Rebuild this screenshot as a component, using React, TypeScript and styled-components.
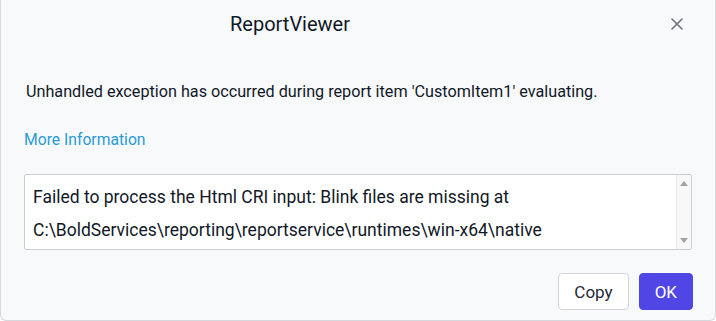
import React from 'react'
import styled, { createGlobalStyle } from 'styled-components'

const GlobalStyle = createGlobalStyle`
  html, body {
    margin: 0;
    padding: 0;
    background: #ffffff;
  }
  body {
    font-family: Roboto, "Liberation Sans", Arial, sans-serif;
  }
`

const Dialog = styled.div`
  box-sizing: border-box;
  width: 716px;
  height: 321px;
  background: #f8f9fb;
  border: 1px solid #d5d8dd;
  border-top: none;
  border-radius: 0 0 6px 6px;
  display: flex;
  flex-direction: column;
`

const Header = styled.div`
  height: 48px;
  display: flex;
  align-items: center;
  padding: 0 26px 0 229px;
`

const Title = styled.h2`
  flex: 1;
  margin: 0;
  font-size: 20px;
  font-weight: 400;
  color: #111827;
`

const CloseButton = styled.button`
  width: 24px;
  height: 24px;
  padding: 0;
  border: none;
  background: transparent;
  display: flex;
  align-items: center;
  justify-content: center;
  cursor: pointer;
`

const Body = styled.div`
  flex: 1;
  display: flex;
  flex-direction: column;
  padding: 34px 23px 0 23px;
`

const Message = styled.p`
  margin: 0 0 0 2px;
  font-size: 16.2px;
  line-height: 20px;
  color: #111827;
`

const MoreLink = styled.a`
  margin-top: 28px;
  font-size: 15.7px;
  line-height: 20px;
  font-weight: 400;
  color: #2a9bd6;
  text-decoration: none;
  cursor: pointer;
`

const DetailBox = styled.div`
  margin-top: 24px;
  height: 76px;
  box-sizing: border-box;
  border: 1px solid #c9ccd1;
  border-radius: 2px;
  background: #ffffff;
  display: flex;
`

const DetailText = styled.div`
  flex: 1;
  padding: 6px 8px 0 8px;
  font-size: 17.5px;
  line-height: 33px;
  color: #111827;
  overflow: hidden;
`

const ScrollTrack = styled.div`
  width: 14px;
  border-left: 1px solid #ececec;
  background: #f8f8f8;
  display: flex;
  flex-direction: column;
  justify-content: space-between;
  align-items: center;
  padding: 3px 0;
`

const Arrow = styled.span<{ down?: boolean }>`
  width: 0;
  height: 0;
  border-left: 4px solid transparent;
  border-right: 4px solid transparent;
  ${p => (p.down ? 'border-top: 5px solid #a3a3a3;' : 'border-bottom: 5px solid #a3a3a3;')}
  margin: 3px 0;
`

const Footer = styled.div`
  height: 60px;
  display: flex;
  justify-content: flex-end;
  align-items: flex-start;
  gap: 10px;
  padding: 13px 22px 0 0;
  box-sizing: border-box;
`

const Button = styled.button<{ primary?: boolean }>`
  height: 37px;
  box-sizing: border-box;
  padding: 0 15px;
  border-radius: 4px;
  font-family: Roboto, "Liberation Sans", Arial, sans-serif;
  font-size: 17px;
  cursor: pointer;
  border: 1px solid ${p => (p.primary ? '#4f46e5' : '#d1d5db')};
  background: ${p => (p.primary ? '#4f46e5' : '#ffffff')};
  color: ${p => (p.primary ? '#ffffff' : '#1f2937')};
`

export default function App() {
  return (
    <>
      <GlobalStyle />
      <Dialog>
        <Header>
          <Title>ReportViewer</Title>
          <CloseButton aria-label="Close">
            <svg width="14" height="14" viewBox="0 0 14 14">
              <path d="M2 2 L12 12 M12 2 L2 12" stroke="#6b7280" strokeWidth="1.6" strokeLinecap="round" />
            </svg>
          </CloseButton>
        </Header>
        <Body>
          <Message>Unhandled exception has occurred during report item 'CustomItem1' evaluating.</Message>
          <MoreLink>More Information</MoreLink>
          <DetailBox>
            <DetailText>
              Failed to process the Html CRI input: Blink files are missing at
              <br />
              C:\BoldServices\reporting\reportservice\runtimes\win-x64\native
            </DetailText>
            <ScrollTrack>
              <Arrow />
              <Arrow down />
            </ScrollTrack>
          </DetailBox>
        </Body>
        <Footer>
          <Button>Copy</Button>
          <Button primary>OK</Button>
        </Footer>
      </Dialog>
    </>
  )
}
